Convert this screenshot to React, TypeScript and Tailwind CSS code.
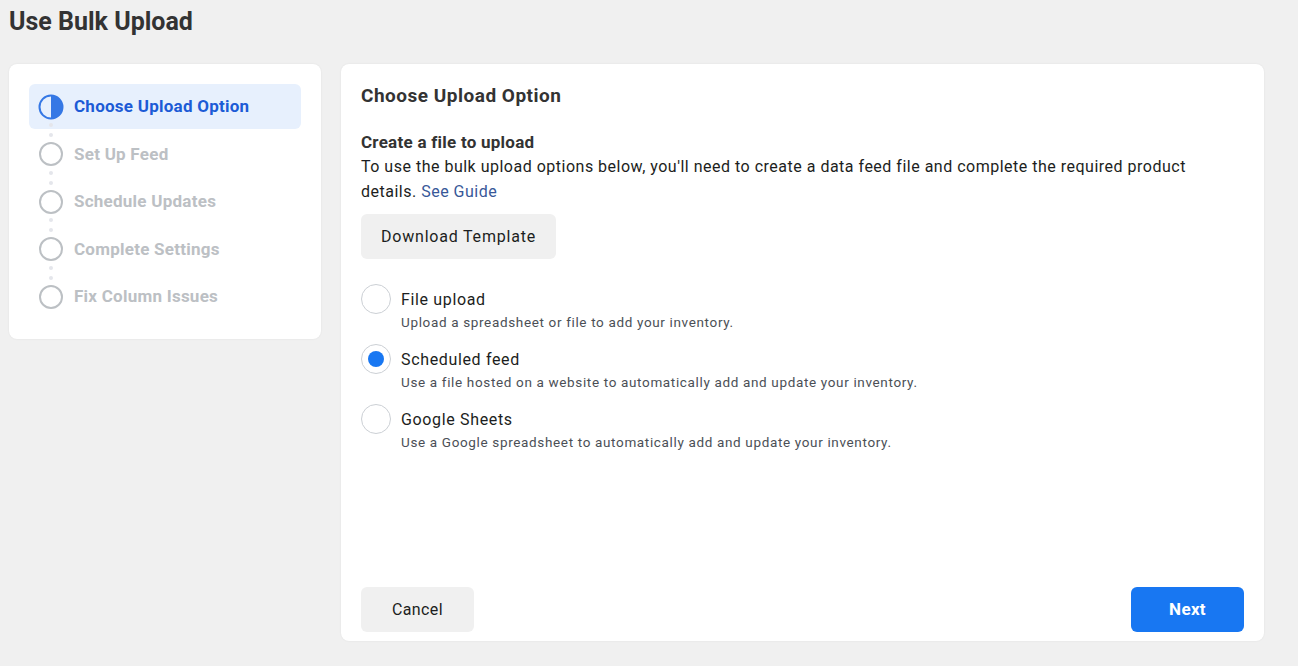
import React, { useState } from 'react';

const steps = ['Choose Upload Option', 'Set Up Feed', 'Schedule Updates', 'Complete Settings', 'Fix Column Issues'];

const options = [
  { id: 'file', label: 'File upload', desc: 'Upload a spreadsheet or file to add your inventory.' },
  { id: 'scheduled', label: 'Scheduled feed', desc: 'Use a file hosted on a website to automatically add and update your inventory.' },
  { id: 'sheets', label: 'Google Sheets', desc: 'Use a Google spreadsheet to automatically add and update your inventory.' }
];

const HalfCircle: React.FC = () => (
  <svg width="26" height="26" viewBox="0 0 26 26">
    <circle cx="13" cy="13" r="11.5" fill="none" stroke="#3578e5" strokeWidth="2" />
    <path d="M13 1.5 A11.5 11.5 0 0 1 13 24.5 Z" fill="#3578e5" />
  </svg>
);

const App: React.FC = () => {
  const [selected, setSelected] = useState<string>('scheduled');

  return (
    <div className="min-h-[666px] bg-[#f0f0f0] font-['Roboto',sans-serif] text-[#1c1e21]">
      <h1 className="pl-[9px] pt-[7px] text-[25px] font-bold leading-[30px] text-[#333]">Use Bulk Upload</h1>
      <div className="flex items-start gap-5 px-[9px] pt-[27px]">
        {/* Steps */}
        <div className="w-[312px] rounded-lg bg-white px-5 pt-[19px] pb-[18px] shadow-[0_0_2px_rgba(0,0,0,0.08)]">
          {steps.map((s, i) => (
            <div key={s} className="relative flex h-[47.5px] items-center">
              <div
                className={
                  'flex h-[45px] w-full items-center gap-[10px] rounded-md pl-[9px] ' +
                  (i === 0 ? 'bg-[#e7f0fd]' : '')
                }
              >
                {i === 0 ? (
                  <HalfCircle />
                ) : (
                  <span className="mx-[1px] h-[24px] w-[24px] rounded-full border-2 border-[#bcc0c4]" />
                )}
                <span
                  className={
                    'text-[17px] font-bold tracking-[0.25px] ' + (i === 0 ? 'text-[#1c5bd6]' : 'text-[#bcc0c4]')
                  }
                >
                  {s}
                </span>
              </div>
              {i < steps.length - 1 && (
                <>
                  <span className="absolute left-[20px] top-[40px] h-[4px] w-[4px] rounded-full bg-[#e4e6eb]" />
                  <span className="absolute left-[20px] top-[50px] h-[4px] w-[4px] rounded-full bg-[#e4e6eb]" />
                </>
              )}
            </div>
          ))}
        </div>

        {/* Main card */}
        <div className="mr-[25px] flex h-[577px] flex-1 flex-col rounded-lg bg-white px-5 pb-[9px] shadow-[0_0_2px_rgba(0,0,0,0.08)]">
          <h2 className="pt-[21px] text-[19px] font-bold leading-[22px] tracking-[0.5px] text-[#333]">Choose Upload Option</h2>
          <div className="mt-[23px] text-[17px] font-bold leading-[24px] tracking-[0.25px] text-[#333]">Create a file to upload</div>
          <p className="text-[16px] leading-[25px] tracking-[0.5px] text-[#1c1e21]">
            To use the bulk upload options below, you'll need to create a data feed file and complete the required product
            details. <span className="text-[#385898]">See Guide</span>
          </p>
          <div className="mt-[10px]">
            <button className="h-[45px] w-[195px] rounded-md bg-[#f0f0f0] text-[16px] tracking-[0.8px] text-[#1c1e21]">
              Download Template
            </button>
          </div>
          <div className="mt-[25px] flex flex-col gap-[16px]">
            {options.map(o => (
              <label key={o.id} className="flex cursor-pointer items-start gap-[10px]" onClick={() => setSelected(o.id)}>
                <span className="flex h-[30px] w-[30px] shrink-0 items-center justify-center rounded-full border border-[#ccd0d5] bg-white">
                  {selected === o.id && <span className="h-[16px] w-[16px] rounded-full bg-[#1877f2]" />}
                </span>
                <span className="-mb-[5px] flex flex-col pt-[5px]">
                  <span className="text-[16px] leading-[22px] tracking-[0.65px] text-[#1c1e21]">{o.label}</span>
                  <span className="text-[13.5px] leading-[22px] tracking-[0.65px] text-[#4b4f56]">{o.desc}</span>
                </span>
              </label>
            ))}
          </div>
          <div className="mt-auto flex items-center justify-between">
            <button className="h-[45px] w-[113px] rounded-md bg-[#f0f0f0] text-[16px] tracking-[0.4px] text-[#1c1e21]">Cancel</button>
            <button className="h-[45px] w-[113px] rounded-md bg-[#1877f2] text-[17px] font-bold tracking-[0.3px] text-white">Next</button>
          </div>
        </div>
      </div>
    </div>
  );
};

export default App;
